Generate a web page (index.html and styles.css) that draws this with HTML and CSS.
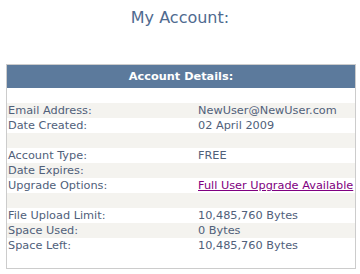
FILE: index.html
```html
<!DOCTYPE html>
<html>
<head>
<meta charset="utf-8">
<link rel="stylesheet" href="styles.css">
</head>
<body>
<h1 class="title">My Account:</h1>
<div class="card">
  <div class="card-head">Account Details:</div>
  <div class="rows">
    <div class="row"></div>
    <div class="row alt"><span class="label">Email Address:</span><span class="value">NewUser@NewUser.com</span></div>
    <div class="row"><span class="label">Date Created:</span><span class="value">02 April 2009</span></div>
    <div class="row alt"></div>
    <div class="row"><span class="label">Account Type:</span><span class="value">FREE</span></div>
    <div class="row alt"><span class="label">Date Expires:</span><span class="value"></span></div>
    <div class="row"><span class="label">Upgrade Options:</span><span class="value"><a class="link" href="#">Full User Upgrade Available</a></span></div>
    <div class="row alt"></div>
    <div class="row"><span class="label">File Upload Limit:</span><span class="value">10,485,760 Bytes</span></div>
    <div class="row alt"><span class="label">Space Used:</span><span class="value">0 Bytes</span></div>
    <div class="row"><span class="label">Space Left:</span><span class="value">10,485,760 Bytes</span></div>
    <div class="row"></div>
  </div>
</div>
</body>
</html>
```
FILE: styles.css
```css
html, body {
  margin: 0;
  padding: 0;
  background: #ffffff;
}
body {
  font-family: "DejaVu Sans", Verdana, sans-serif;
  color: #50607a;
}
.title {
  margin: 0;
  padding-top: 8px;
  height: 64px;
  box-sizing: border-box;
  text-align: center;
  font-size: 16px;
  font-weight: normal;
  line-height: 20px;
  color: #4f6a8f;
}
.card {
  margin: 0 4px 0 6px;
  border: 1px solid #cccccc;
  width: 348px;
}
.card-head {
  background: #5c7a9c;
  color: #ffffff;
  font-weight: bold;
  font-size: 11.3px;
  height: 23px;
  line-height: 23px;
  text-align: center;
}
.rows {
  display: flex;
  flex-direction: column;
}
.row {
  display: flex;
  height: 15px;
  line-height: 16px;
  font-size: 11.3px;
}
.row.alt {
  background: #f4f3ef;
}
.label {
  width: 190px;
  padding-left: 1px;
  flex: none;
}
.value {
  flex: 1;
  white-space: nowrap;
}
.link {
  color: #800080;
  text-decoration: underline;
}
```
